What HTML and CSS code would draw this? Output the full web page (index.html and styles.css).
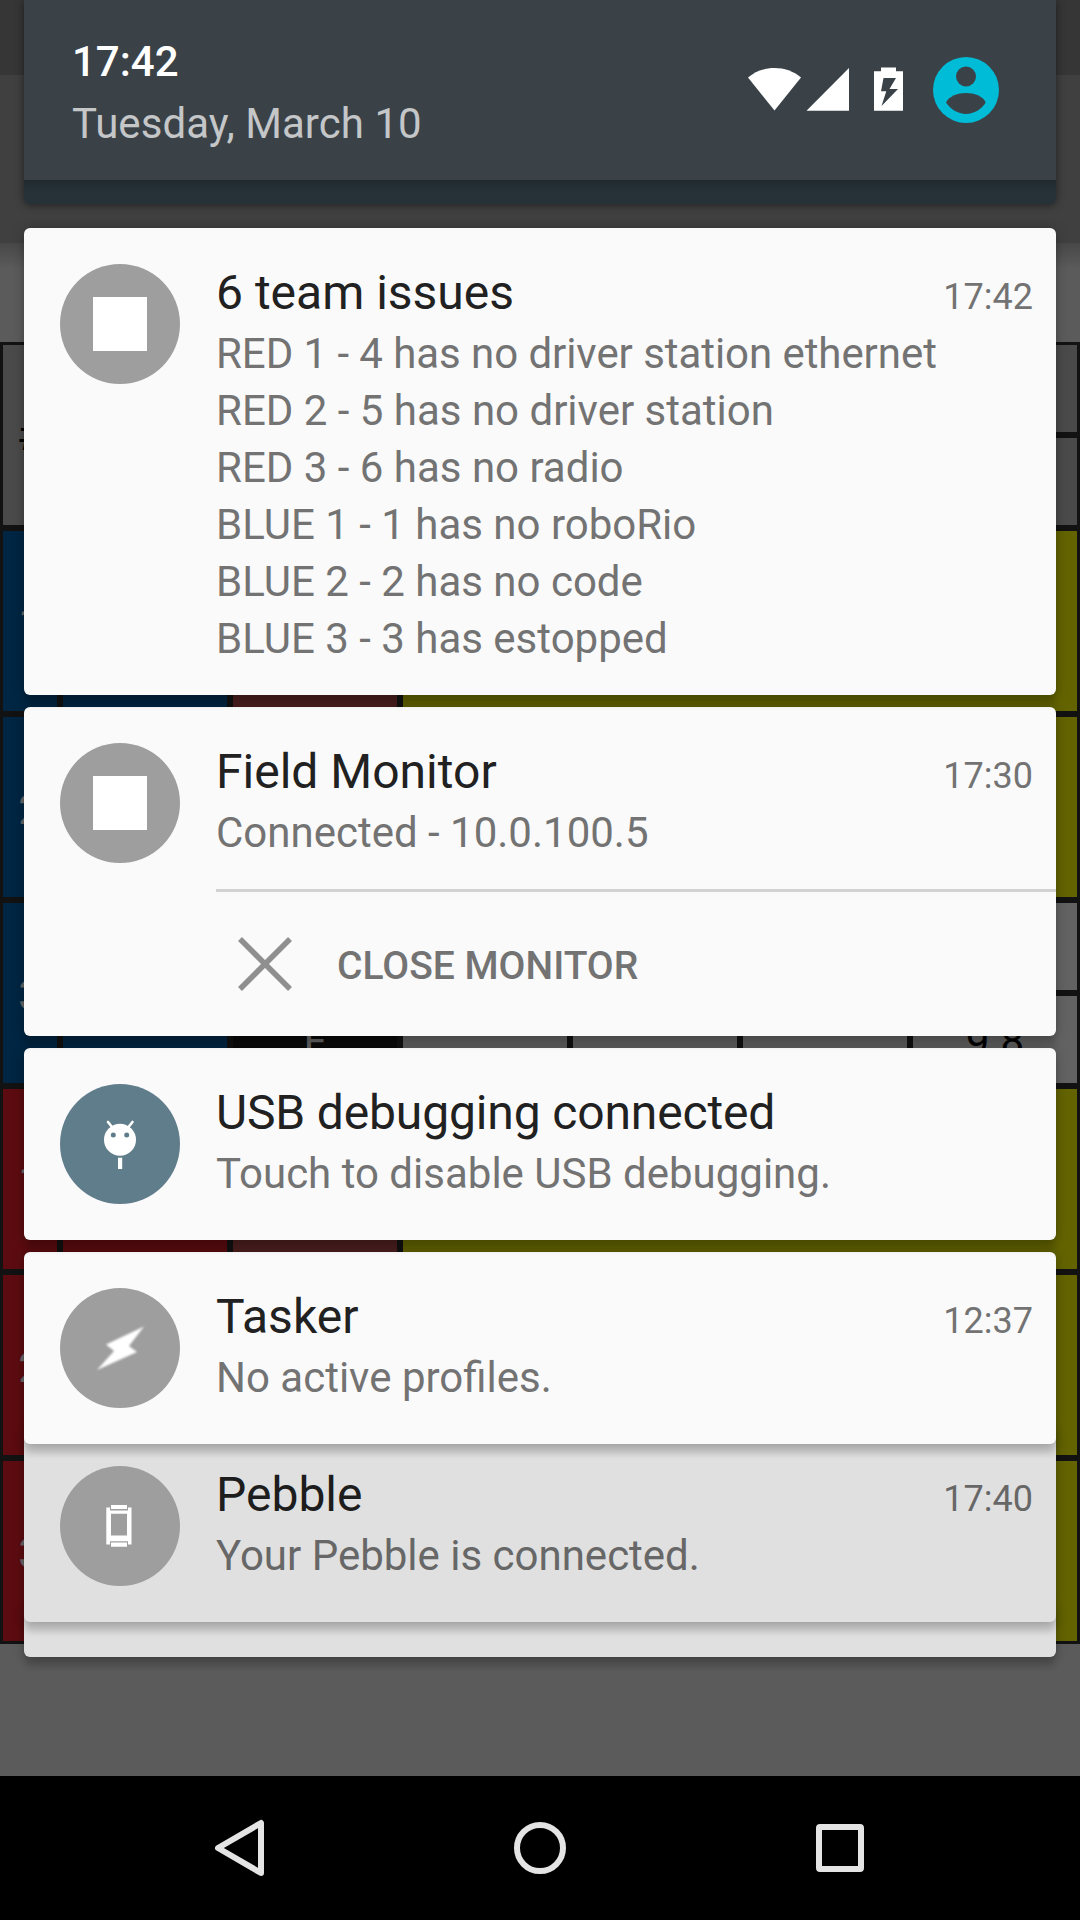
FILE: index.html
```html
<!DOCTYPE html>
<html lang="en">
<head>
<meta charset="utf-8">
<title>Notifications</title>
<link rel="stylesheet" href="styles.css">
</head>
<body>
<div class="screen">
  <div class="app">
    <div class="app-status"></div>
    <div class="app-toolbar"></div>
    <div class="app-body">
      <div class="field">
        <div class="cell head tall"><span>#</span></div>
        <div class="cell head tall"></div>
        <div class="cell head tall"></div>
        <div class="cell head wide"></div>
        <div class="cell head wide"></div>

        <div class="cell blue tall">1</div>
        <div class="cell blue tall"></div>
        <div class="cell warn tall"></div>
        <div class="cell yellow block"></div>

        <div class="cell blue tall">2</div>
        <div class="cell blue tall"></div>
        <div class="cell warn tall"></div>
        <div class="cell yellow block"></div>

        <div class="cell blue tall">3</div>
        <div class="cell blue tall"></div>
        <div class="cell black"></div>
        <div class="cell gray wide"></div>
        <div class="cell black">F</div>
        <div class="cell gray"></div>
        <div class="cell gray"></div>
        <div class="cell gray"></div>
        <div class="cell gray">9.8</div>

        <div class="cell red tall">1</div>
        <div class="cell red tall"></div>
        <div class="cell warn tall"></div>
        <div class="cell yellow block"></div>

        <div class="cell red tall">2</div>
        <div class="cell red tall"></div>
        <div class="cell warn tall"></div>
        <div class="cell yellow block"></div>

        <div class="cell red tall">3</div>
        <div class="cell red tall"></div>
        <div class="cell warn tall"></div>
        <div class="cell yellow block"></div>
      </div>
    </div>
  </div>

  <div class="shade">
    <header class="panel">
      <div class="panel-main">
        <div class="when">
          <div class="clock">17:42</div>
          <div class="date">Tuesday, March 10</div>
        </div>
        <div class="status">
          <svg class="wifi" width="54" height="44" viewBox="0 0 54 44"><path d="M0 9.500C8 3 17 0 26.500 0S45.500 3 53 9.500L26.500 42.500Z" fill="#fff"/></svg>
          <svg class="signal" width="43" height="44" viewBox="0 0 43 44"><path d="M-0.500 42.700L42 0V42.700Z" fill="#fff"/></svg>
          <svg class="battery" width="29" height="44" viewBox="0 0 29 44"><path fill-rule="evenodd" fill="#fff" d="M7 -0.500H22V3.300H29V42.700H0V3.300H7ZM9.500 10L7 23.300H12.300L7.500 38L24 21H15.500L22 10Z"/></svg>
          <svg class="user" width="66" height="66" viewBox="0 0 66 66"><circle cx="33" cy="33" r="33" fill="#00bcd7"/><circle cx="33" cy="19.500" r="10" fill="#3a4248"/><path d="M13 45.500C16 39 25 36 33 36S50 39 52.700 45.500C49 52 41 57 33 57S17 52 13 45.500Z" fill="#3a4248"/></svg>
        </div>
      </div>
      <div class="panel-foot"></div>
    </header>

    <main class="stack">
      <article class="card issues">
        <div class="avatar"><i class="square"></i></div>
        <div class="content">
          <div class="top"><h2>6 team issues</h2><time>17:42</time></div>
          <p>RED 1 - 4 has no driver station ethernet</p>
          <p>RED 2 - 5 has no driver station</p>
          <p>RED 3 - 6 has no radio</p>
          <p>BLUE 1 - 1 has no roboRio</p>
          <p>BLUE 2 - 2 has no code</p>
          <p>BLUE 3 - 3 has estopped</p>
        </div>
      </article>

      <article class="card monitor">
        <div class="avatar"><i class="square"></i></div>
        <div class="content">
          <div class="top"><h2>Field Monitor</h2><time>17:30</time></div>
          <p>Connected - 10.0.100.5</p>
          <div class="action">
            <svg width="54" height="54" viewBox="0 0 54 54"><path d="M2 2L52 52M52 2L2 52" stroke="#8f8f8f" stroke-width="5.500"/></svg>
            <span>CLOSE MONITOR</span>
          </div>
        </div>
      </article>

      <article class="card usb">
        <div class="avatar slate">
          <svg width="120" height="120" viewBox="0 0 120 120"><path d="M48 38L52 43M72.500 38L68.500 43" stroke="#fff" stroke-width="2.600" stroke-linecap="round"/><circle cx="60" cy="55.700" r="16" fill="#fff"/><circle cx="53.300" cy="51" r="2.500" fill="#607d8b"/><circle cx="66.700" cy="51" r="2.500" fill="#607d8b"/><path d="M58 73.700h4.200v11.300h-4.200z" fill="#fff"/></svg>
        </div>
        <div class="content">
          <div class="top"><h2>USB debugging connected</h2></div>
          <p>Touch to disable USB debugging.</p>
        </div>
      </article>

      <article class="card tasker">
        <div class="avatar">
          <svg class="soft" width="120" height="120" viewBox="0 0 120 120"><path d="M84 38.500L46 56.500L54 63L37 82L77 64L69 58Z" fill="#fff"/></svg>
        </div>
        <div class="content">
          <div class="top"><h2>Tasker</h2><time>12:37</time></div>
          <p>No active profiles.</p>
        </div>
      </article>

      <article class="card pebble">
        <div class="avatar">
          <svg width="120" height="120" viewBox="0 0 120 120"><path fill="#fff" d="M51 39H67V43H51ZM51 76.500H67V80.700H51Z"/><path fill="#fff" fill-rule="evenodd" d="M46.300 41.500H50V44.500H68V41.500H71.500V78.500H68V75.200H50V78.500H46.300ZM51 47.700V69.500H67V47.700Z"/></svg>
        </div>
        <div class="content">
          <div class="top"><h2>Pebble</h2><time>17:40</time></div>
          <p>Your Pebble is connected.</p>
        </div>
      </article>

      <div class="card more"></div>
    </main>
  </div>

  <nav class="navbar">
    <svg width="60" height="60" viewBox="0 0 60 60"><path d="M51 5V55L8 30Z" fill="none" stroke="#e4e4e4" stroke-width="6" stroke-linejoin="round"/></svg>
    <svg width="60" height="60" viewBox="0 0 60 60"><circle cx="30" cy="30" r="23" fill="none" stroke="#e4e4e4" stroke-width="6"/></svg>
    <svg width="60" height="60" viewBox="0 0 60 60"><rect x="9" y="9" width="42" height="42" rx="1" fill="none" stroke="#e4e4e4" stroke-width="6" stroke-linejoin="round"/></svg>
  </nav>
</div>
</body>
</html>
```
FILE: styles.css
```css
* { box-sizing: border-box; }

body {
  margin: 0;
  font-family: Roboto, "Liberation Sans", sans-serif;
}

h2, p { margin: 0; font-weight: 400; }

svg { overflow: visible; }

.screen {
  position: relative;
  width: 1080px;
  height: 1920px;
  overflow: hidden;
  display: flex;
  flex-direction: column;
  background: #5b5b5b;
}

/* Dimmed app behind the shade */
.app { flex: 1; }
.app-status { height: 75px; background: #363636; }
.app-toolbar { height: 168px; background: #404040; }
.app-body {
  padding-top: 99px;
  background: linear-gradient(#484848, #5b5b5b 26px);
}

.field {
  display: grid;
  grid-template-columns: 54px repeat(6, 164px);
  grid-auto-rows: 87px;
  gap: 6px;
  padding: 3px;
  background: #121212;
  font-size: 42px;
  line-height: 49px;
  color: #666;
}
.cell {
  display: flex;
  align-items: center;
  justify-content: center;
  padding-top: 4px;
}
.tall { grid-row: span 2; }
.wide { grid-column: span 4; }
.block { grid-row: span 2; grid-column: span 4; }
.head { padding-top: 1px; background: #4a4a4a; color: #000; }
.blue { background: #002643; }
.red { background: #5c0c10; }
.warn { background: #4e2020; }
.yellow { background: #636300; }
.black { background: #0b0b0b; }
.gray { background: #626262; color: #000; }

/* Notification shade */
.shade {
  position: absolute;
  inset: 0 24px auto;
}

.panel {
  height: 204px;
  border-radius: 0 0 6px 6px;
  background: #263238;
  box-shadow: 0 1px 8px rgba(0, 0, 0, .5);
}
.panel-main {
  display: flex;
  justify-content: space-between;
  height: 180px;
  padding: 37px 57px 0 48px;
  background: #3a4248;
}
.panel-foot {
  height: 24px;
  border-radius: 0 0 6px 6px;
  background: linear-gradient(#1f292e, #263238 12px);
}
.clock, .date { font-size: 42px; line-height: 50px; }
.clock { font-weight: 500; color: #fff; }
.date { margin-top: 12px; letter-spacing: .05px; color: #c4c6c8; }
.status {
  display: flex;
  align-items: center;
  height: 66px;
  margin-top: 20px;
}
.signal { margin-left: 5px; }
.battery { margin-left: 24px; }
.user { margin-left: 30px; }

.stack {
  display: flex;
  flex-direction: column;
  gap: 12px;
  margin-top: 24px;
}
.card {
  position: relative;
  display: flex;
  flex: none;
  gap: 36px;
  height: 192px;
  padding: 36px 0 0 36px;
  border-radius: 6px;
  background: #fafafa;
  box-shadow: 0 11px 6px -1px rgba(0, 0, 0, .13), 0 1px 12px rgba(0, 0, 0, .25);
}
.issues { z-index: 6; height: 467px; }
.monitor { z-index: 5; height: 329px; }
.usb { z-index: 4; }
.tasker { z-index: 3; }
.pebble { z-index: 2; margin-top: -26px; background: #e0e0e0; }
.more { z-index: 1; height: 49px; margin-top: -26px; background: #e0e0e0; }

.avatar {
  display: flex;
  flex: none;
  align-items: center;
  justify-content: center;
  width: 120px;
  height: 120px;
  border-radius: 50%;
  background: #9e9e9e;
}
.slate { background: #607d8b; }
.square { width: 54px; height: 54px; background: #fff; }
.soft { filter: blur(.8px); }

.content { flex: 1; }
.top {
  display: flex;
  align-items: baseline;
  justify-content: space-between;
  height: 61px;
  padding-right: 23px;
}
.top h2 { font-size: 48px; line-height: 57px; color: #212121; }
.top time { font-size: 36px; line-height: 42px; color: #737373; }
.content p { font-size: 42px; line-height: 57px; color: #737373; }
.issues .top + p { letter-spacing: -.06px; }
.usb .top h2 { letter-spacing: -.15px; }
.pebble .top h2 { color: #1d1d1d; }
.pebble .top time, .pebble .content p { color: #676767; }

.action {
  display: flex;
  align-items: center;
  gap: 45px;
  height: 147px;
  margin-top: 28px;
  padding-left: 22px;
  border-top: 3px solid #d2d2d2;
  font-size: 39px;
  font-weight: 500;
  color: #737373;
}
.action span { padding-top: 4px; }

.navbar {
  display: flex;
  align-items: center;
  justify-content: center;
  gap: 240px;
  height: 144px;
  background: #000;
}
```
